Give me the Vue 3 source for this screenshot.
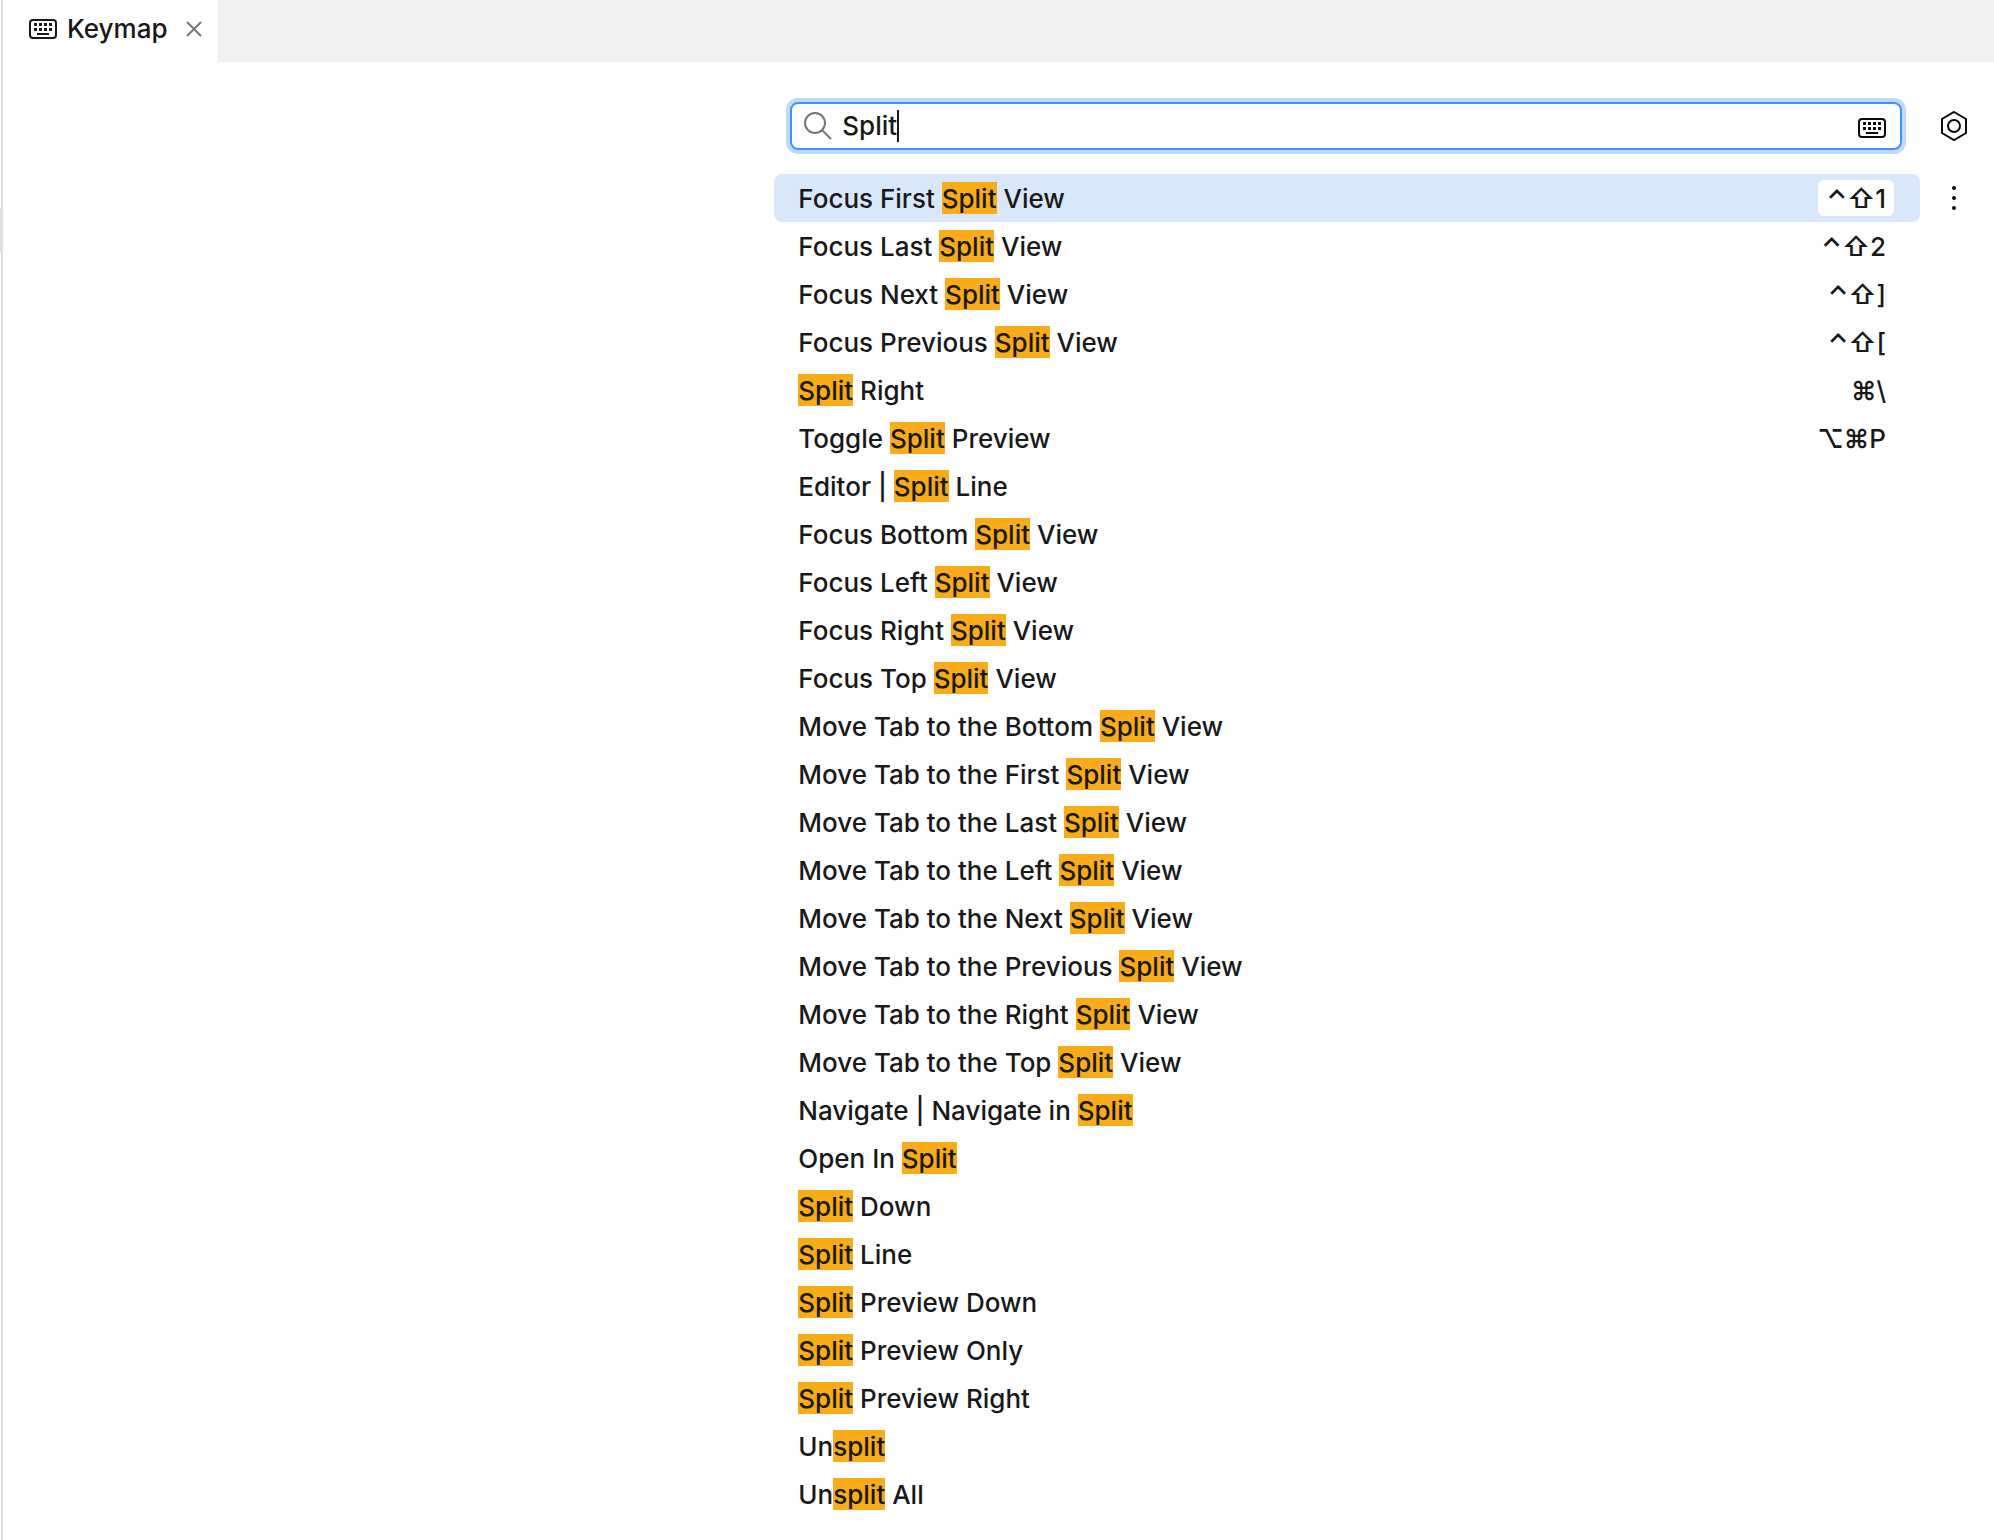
<script setup>
import { computed, ref } from 'vue'

const query = ref('Split')
const selected = ref(0)

const actions = [
  { name: 'Focus First Split View', modifiers: '⌃⇧', key: '1' },
  { name: 'Focus Last Split View', modifiers: '⌃⇧', key: '2' },
  { name: 'Focus Next Split View', modifiers: '⌃⇧', key: ']' },
  { name: 'Focus Previous Split View', modifiers: '⌃⇧', key: '[' },
  { name: 'Split Right', modifiers: '⌘', key: '\\' },
  { name: 'Toggle Split Preview', modifiers: '⌥⌘', key: 'P' },
  { name: 'Editor | Split Line' },
  { name: 'Focus Bottom Split View' },
  { name: 'Focus Left Split View' },
  { name: 'Focus Right Split View' },
  { name: 'Focus Top Split View' },
  { name: 'Move Tab to the Bottom Split View' },
  { name: 'Move Tab to the First Split View' },
  { name: 'Move Tab to the Last Split View' },
  { name: 'Move Tab to the Left Split View' },
  { name: 'Move Tab to the Next Split View' },
  { name: 'Move Tab to the Previous Split View' },
  { name: 'Move Tab to the Right Split View' },
  { name: 'Move Tab to the Top Split View' },
  { name: 'Navigate | Navigate in Split' },
  { name: 'Open In Split' },
  { name: 'Split Down' },
  { name: 'Split Line' },
  { name: 'Split Preview Down' },
  { name: 'Split Preview Only' },
  { name: 'Split Preview Right' },
  { name: 'Unsplit' },
  { name: 'Unsplit All' },
]

// Break each matching name into the text before, inside and after the match.
const rows = computed(() => {
  const q = query.value.toLowerCase()
  return actions
    .map((a) => ({ ...a, at: a.name.toLowerCase().indexOf(q) }))
    .filter((a) => a.at >= 0)
    .map((a) => ({
      ...a,
      before: a.name.slice(0, a.at),
      match: a.name.slice(a.at, a.at + q.length),
      after: a.name.slice(a.at + q.length),
    }))
})
</script>

<template>
  <div class="window">
    <div class="gutter"><div class="gutter-thumb"></div></div>
    <div class="editor">
      <header class="tabs">
        <div class="tab">
          <svg class="icon" viewBox="0 0 28 20" width="28" height="20" aria-hidden="true">
            <rect x="1" y="1" width="26" height="18" rx="3" fill="none" stroke="currentColor" stroke-width="2" />
            <path d="M5 4h3v3h-3zM10 4h3v3h-3zM15 4h3v3h-3zM20 4h3v3h-3zM5 9h3v3h-3zM10 9h3v3h-3zM15 9h3v3h-3zM20 9h3v3h-3zM8 14h12v2h-12z" fill="currentColor" />
          </svg>
          <span class="tab-title">Keymap</span>
          <button class="close" type="button" aria-label="Close tab">
            <svg viewBox="0 0 16 16" width="16" height="16">
              <path d="M1 1L15 15M15 1L1 15" fill="none" stroke="currentColor" stroke-width="2" />
            </svg>
          </button>
        </div>
      </header>

      <main class="keymap">
        <label class="search">
          <svg class="magnifier" viewBox="0 0 28 28" width="28" height="28" aria-hidden="true">
            <circle cx="11" cy="11" r="10" fill="none" stroke="currentColor" stroke-width="2" />
            <path d="M18 18L27 27" fill="none" stroke="currentColor" stroke-width="2" />
          </svg>
          <input v-model="query" class="query" type="text" aria-label="Search actions" spellcheck="false" />
          <span class="caret"></span>
          <button class="by-key" type="button" aria-label="Search by shortcut">
            <svg class="icon" viewBox="0 0 28 20" width="28" height="20">
              <rect x="1" y="1" width="26" height="18" rx="3" fill="none" stroke="currentColor" stroke-width="2" />
              <path d="M5 4h3v3h-3zM10 4h3v3h-3zM15 4h3v3h-3zM20 4h3v3h-3zM5 9h3v3h-3zM10 9h3v3h-3zM15 9h3v3h-3zM20 9h3v3h-3zM8 14h12v2h-12z" fill="currentColor" />
            </svg>
          </button>
        </label>
        <button class="side-button" type="button" aria-label="Keymap settings">
          <svg viewBox="0 0 28 32" width="28" height="32">
            <path d="M14 2L26 9V23L14 30L2 23V9Z" fill="none" stroke="currentColor" stroke-width="2" />
            <circle cx="14" cy="16" r="6" fill="none" stroke="currentColor" stroke-width="2" />
          </svg>
        </button>

        <ul class="actions">
          <li
            v-for="(row, i) in rows"
            :key="row.name"
            class="action"
            :class="{ selected: i === selected }"
            @click="selected = i"
          >
            <span class="name">{{ row.before }}<mark>{{ row.match }}</mark>{{ row.after }}</span>
            <kbd v-if="row.key" class="keys"><span class="modifiers">{{ row.modifiers }}</span>{{ row.key }}</kbd>
          </li>
        </ul>
        <button class="side-button" type="button" aria-label="More actions">
          <svg viewBox="0 0 28 32" width="28" height="32" fill="currentColor">
            <circle cx="14" cy="6" r="2" />
            <circle cx="14" cy="16" r="2" />
            <circle cx="14" cy="26" r="2" />
          </svg>
        </button>
      </main>
    </div>
  </div>
</template>

<style>
body {
  margin: 0;
  background: #fff;
}
</style>

<style scoped>
.window {
  display: flex;
  min-height: 100vh;
  font-family: Inter, 'Liberation Sans', sans-serif;
  font-size: 26px;
  font-weight: 500;
  line-height: 32px;
  color: #18191b;
}

button {
  display: flex;
  align-items: center;
  justify-content: center;
  padding: 0;
  border: 0;
  background: none;
  color: #0b0b0c;
}

svg {
  display: block;
  flex: none;
}

.gutter {
  width: 1px;
  padding-top: 208px;
}

.gutter-thumb {
  height: 44px;
  background: #dfdfdf;
}

.editor {
  flex: 1;
  min-width: 0;
  border-left: 2px solid #dfdfdf;
}

.tabs {
  display: flex;
  height: 62px;
  background: #f1f1f1;
}

.tab {
  display: flex;
  align-items: center;
  padding: 0 16px 4px 26px;
  background: #fff;
}

.tab-title {
  margin: 0 18px 0 10px;
}

.close {
  color: #757678;
}

.keymap {
  display: grid;
  grid-template-columns: 1fr 68px;
  row-gap: 24px;
  margin-left: 38.74%;
  padding: 40px 6px 22px 0;
}

.search {
  display: flex;
  align-items: center;
  box-sizing: border-box;
  height: 48px;
  margin: 0 18px 0 16px;
  padding: 0 14px 0 12px;
  border: 2px solid #3b93fb;
  border-radius: 8px;
  box-shadow: 0 0 0 4px #bed9fa;
}

.magnifier {
  color: #757678;
}

.query {
  field-sizing: content;
  min-width: 0;
  margin: 0 0 0 10px;
  padding: 0;
  border: 0;
  outline: 0;
  background: none;
  font: inherit;
  color: inherit;
  caret-color: transparent;
}

.caret {
  width: 2px;
  height: 32px;
  background: #18191b;
}

.by-key {
  margin-left: auto;
  padding-top: 4px;
}

.side-button {
  height: 48px;
}

.actions {
  margin: 0;
  padding: 0;
  list-style: none;
}

.action {
  display: flex;
  align-items: center;
  justify-content: space-between;
  height: 48px;
  padding: 0 26px 0 24px;
  border-radius: 8px;
  line-height: 30px;
}

.action.selected {
  background: #d9e7fa;
}

.name {
  white-space: pre;
}

mark {
  display: inline-block;
  padding-top: 2px;
  background: #faab18;
  color: inherit;
}

.keys {
  padding: 4px 8px 2px;
  border-radius: 6px;
  font: inherit;
}

.modifiers {
  font-weight: 600;
}

.selected .keys {
  background: #fff;
}
</style>
